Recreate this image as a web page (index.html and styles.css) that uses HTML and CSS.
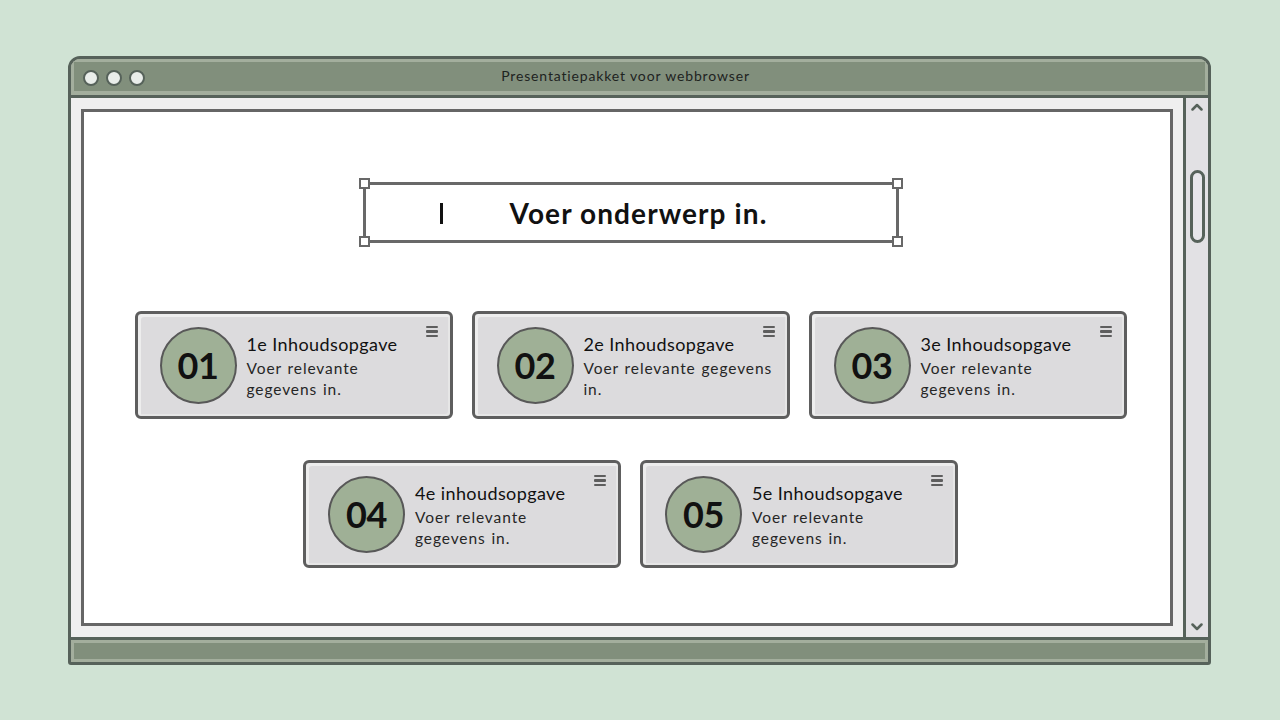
FILE: index.html
```html
<!DOCTYPE html>
<html lang="nl">
<head>
<meta charset="utf-8">
<title>Presentatiepakket voor webbrowser</title>
<link rel="stylesheet" href="styles.css">
</head>
<body>
<div class="window">
  <div class="titlebar">
    <div class="dots"><span class="dot"></span><span class="dot"></span><span class="dot"></span></div>
    <div class="title">Presentatiepakket voor webbrowser</div>
  </div>
  <div class="main">
    <div class="content">
      <div class="slide">
        <div class="topic">
          <span class="cursor"></span>
          <span class="topic-text">Voer onderwerp in.</span>
          <span class="handle h-tl"></span><span class="handle h-tr"></span>
          <span class="handle h-bl"></span><span class="handle h-br"></span>
        </div>
        <div class="row row-1">
          <div class="card">
            <div class="num">01</div>
            <div class="text"><div class="card-title">1e Inhoudsopgave</div><div class="desc">Voer relevante<br>gegevens in.</div></div>
            <span class="menu"><i></i><i></i><i></i></span>
          </div>
          <div class="card">
            <div class="num">02</div>
            <div class="text"><div class="card-title">2e Inhoudsopgave</div><div class="desc">Voer relevante gegevens<br>in.</div></div>
            <span class="menu"><i></i><i></i><i></i></span>
          </div>
          <div class="card">
            <div class="num">03</div>
            <div class="text"><div class="card-title">3e Inhoudsopgave</div><div class="desc">Voer relevante<br>gegevens in.</div></div>
            <span class="menu"><i></i><i></i><i></i></span>
          </div>
        </div>
        <div class="row row-2">
          <div class="card">
            <div class="num">04</div>
            <div class="text"><div class="card-title">4e inhoudsopgave</div><div class="desc">Voer relevante<br>gegevens in.</div></div>
            <span class="menu"><i></i><i></i><i></i></span>
          </div>
          <div class="card">
            <div class="num">05</div>
            <div class="text"><div class="card-title">5e Inhoudsopgave</div><div class="desc">Voer relevante<br>gegevens in.</div></div>
            <span class="menu"><i></i><i></i><i></i></span>
          </div>
        </div>
      </div>
    </div>
    <div class="scrollbar">
      <svg class="arrow" width="12" height="8" viewBox="0 0 12 8"><path d="M1.5 6.5 L6 2 L10.5 6.5" fill="none" stroke="#56625a" stroke-width="2.5" stroke-linecap="round" stroke-linejoin="round"/></svg>
      <div class="thumb"></div>
      <div class="spacer"></div>
      <svg class="arrow" width="12" height="8" viewBox="0 0 12 8"><path d="M1.5 1.5 L6 6 L10.5 1.5" fill="none" stroke="#56625a" stroke-width="2.5" stroke-linecap="round" stroke-linejoin="round"/></svg>
    </div>
  </div>
  <div class="bottombar"></div>
</div>
</body>
</html>
```
FILE: styles.css
```css
* { box-sizing: border-box; }
html, body { margin: 0; padding: 0; }
body {
  width: 1280px;
  height: 720px;
  background: #d0e3d4;
  padding: 56px 0 0 68px;
  font-family: "Lato", "Noto Sans", sans-serif;
  color: #151515;
}
.window {
  width: 1143px;
  height: 609px;
  border: 3px solid #56625a;
  border-radius: 12px 12px 3px 3px;
  overflow: hidden;
  display: flex;
  flex-direction: column;
  background: #efefef;
}
.titlebar {
  height: 39px;
  flex: none;
  background: #818f7c;
  border-bottom: 3px solid #56625a;
  box-shadow: inset 0 3px 0 #a3ae9d, inset 0 -4px 0 #a3ae9d, inset 3px 0 0 #a3ae9d, inset -3px 0 0 #a3ae9d;
  display: flex;
  align-items: center;
  position: relative;
}
.dots { display: flex; gap: 7px; padding-left: 12px; padding-top: 1px; }
.dot {
  width: 16px; height: 16px;
  border-radius: 50%;
  background: #e9edea;
  border: 2.5px solid #56625a;
}
.title {
  position: absolute;
  left: 0; right: 0; top: 0; bottom: 3px;
  display: flex; align-items: center; justify-content: center;
  padding-right: 28px;
  font-size: 14px;
  letter-spacing: 0.85px;
  color: #1e231f;
}
.main { flex: 1; display: flex; min-height: 0; }
.content { flex: 1; padding: 11px 10px; }
.slide {
  height: 100%;
  background: #ffffff;
  border: 3px solid #666666;
  padding: 70px 0 0 7px;
  display: flex;
  flex-direction: column;
  align-items: center;
}
.topic {
  position: relative;
  width: 536px;
  height: 61px;
  border: 3px solid #686868;
  display: flex;
  align-items: center;
  justify-content: center;
  padding-left: 16px;
}
.topic-text { font-size: 28px; font-weight: 700; color: #111; letter-spacing: 1.1px; }
.cursor {
  position: absolute;
  left: 74px; top: 18px;
  width: 3px; height: 21px;
  background: #111;
}
.handle {
  position: absolute;
  width: 11px; height: 11px;
  background: #fff;
  border: 2px solid #686868;
}
.h-tl { left: -7px; top: -7px; }
.h-tr { right: -7px; top: -7px; }
.h-bl { left: -7px; bottom: -7px; }
.h-br { right: -7px; bottom: -7px; }
.row { display: flex; gap: 19px; }
.row-1 { margin-top: 68px; }
.row-2 { margin-top: 41px; }
.card {
  position: relative;
  width: 318px;
  height: 108px;
  border: 3px solid #5e5e5e;
  border-radius: 6px;
  background: #dcdbdd;
  box-shadow: inset 3px 3px 0 #ededed, inset -2px -2px 0 #e6e6e6;
  display: flex;
  align-items: center;
  padding-left: 22px;
}
.num {
  flex: none;
  width: 77px; height: 77px;
  border-radius: 50%;
  background: #9fb096;
  border: 2px solid #585858;
  display: flex; align-items: center; justify-content: center;
  font-size: 36px; font-weight: 700; color: #111;
  letter-spacing: -0.3px;
}
.text { margin-left: 10px; white-space: nowrap; padding-top: 1px; }
.card-title { font-size: 18px; line-height: 24px; color: #111; letter-spacing: 0.4px; }
.desc { font-size: 15.5px; line-height: 21px; font-weight: 400; color: #262626; margin-top: 2px; letter-spacing: 0.9px; word-spacing: 1px; }
.menu {
  position: absolute;
  top: 12px; right: 12px;
  width: 12px;
  display: flex; flex-direction: column; gap: 2px;
}
.menu i { display: block; height: 2.4px; background: #5e5e5e; border-radius: 1px; }
.scrollbar {
  width: 25px;
  flex: none;
  border-left: 3px solid #56625a;
  background: #e2e1e4;
  display: flex;
  flex-direction: column;
  align-items: center;
  padding: 5px 0 6px;
}
.arrow { flex: none; }
.thumb {
  margin-top: 59px;
  width: 15px; height: 73px;
  border: 3px solid #56625a;
  border-radius: 8px;
  background: #e7e6ea;
}
.spacer { flex: 1; }
.bottombar {
  height: 25px;
  flex: none;
  background: #818f7c;
  border-top: 3px solid #56625a;
  box-shadow: inset 0 0 0 3px #a3ae9d;
}
```
